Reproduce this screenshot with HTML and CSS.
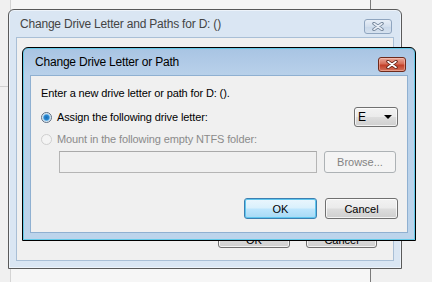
FILE: index.html
```html
<!DOCTYPE html>
<html>
<head>
	<meta charset="utf-8">
	<title>Change Drive Letter or Path</title>
	<link rel="stylesheet" href="styles.css">
</head>
<body>
	<div class="desk">
		<div class="bgpanel"></div>
		<div class="bgline"></div>

		<div class="win outer inactive">
			<div class="titlebar">
				<span class="title">Change Drive Letter and Paths for D: ()</span>
				<span class="close">
					<svg width="12" height="9" viewBox="0 0 12 9"><path d="M2 1.5L10 7.5M10 1.5L2 7.5" stroke="#6d7f95" stroke-width="3.4" stroke-linecap="round"/><path d="M2 1.5L10 7.5M10 1.5L2 7.5" stroke="#e8eef6" stroke-width="1.6" stroke-linecap="round"/></svg>
				</span>
			</div>
			<div class="client">
				<div class="actions">
					<button type="button" class="btn ok-back">OK</button>
					<button type="button" class="btn cancel-back">Cancel</button>
				</div>
			</div>
		</div>

		<div class="win inner active">
			<div class="titlebar">
				<span class="title">Change Drive Letter or Path</span>
				<span class="close">
					<svg width="12" height="9" viewBox="0 0 12 9"><path d="M2 1.5L10 7.5M10 1.5L2 7.5" stroke="#5c1d12" stroke-width="3.4" stroke-linecap="round"/><path d="M2 1.5L10 7.5M10 1.5L2 7.5" stroke="#fff" stroke-width="1.6" stroke-linecap="round"/></svg>
				</span>
			</div>
			<div class="client">
				<div class="prompt">Enter a new drive letter or path for D: ().</div>
				<div class="row row-assign">
					<span class="radio checked"></span>
					<span class="label">Assign the following drive letter:</span>
					<span class="combo"><span class="combo-val">E</span><span class="arrow"></span></span>
				</div>
				<div class="row row-mount disabled">
					<span class="radio"></span>
					<span class="label">Mount in the following empty NTFS folder:</span>
				</div>
				<div class="row row-folder">
					<span class="field"></span>
					<button type="button" class="btn browse" disabled>Browse...</button>
				</div>
				<div class="buttons">
					<button type="button" class="btn default">OK</button>
					<button type="button" class="btn">Cancel</button>
				</div>
			</div>
		</div>
	</div>
</body>
</html>
```

FILE: styles.css
```css
* {
	margin: 0;
	padding: 0;
	box-sizing: border-box;
}

html, body {
	background: #f0f0f0;
	font-family: "Liberation Sans", Arial, sans-serif;
	font-size: 11px;
	color: #000;
}

.desk {
	position: relative;
	width: 432px;
	height: 282px;
	overflow: hidden;
}

/* window far behind */
.bgpanel {
	position: absolute;
	left: 10px;
	top: 0;
	width: 361px;
	height: 282px;
	background: #f6f6f6;
	border-left: 1px solid #d4d4d4;
	border-right: 1px solid #7a7a7a;
}
.bgline {
	position: absolute;
	left: 0;
	top: 86px;
	width: 9px;
	height: 1px;
	background: #d0d0d0;
}

/* windows */
.win {
	position: absolute;
	display: flex;
	flex-direction: column;
	padding: 0 7px 7px;
	border-radius: 6px 6px 0 0;
}
.win.outer {
	left: 8px;
	top: 9px;
	width: 394px;
	height: 260px;
	border: 1px solid #5a5a5a;
	background: #dae6f3;
	box-shadow: inset 0 0 0 1px #edf3fa;
}
.win.inner {
	left: 22px;
	top: 47px;
	width: 394px;
	height: 194px;
	border: 1px solid #000;
	background: linear-gradient(#a8c4e3 0, #b9d1ea 28px, #bcd4eb 100%);
	box-shadow: inset 0 0 0 1px #63c9e8;
}

.titlebar {
	display: flex;
	align-items: flex-start;
	height: 27px;
	flex: none;
}
.title {
	flex: 1;
	padding: 7px 0 0 4px;
	font-size: 12px;
	line-height: 15px;
	letter-spacing: -0.2px;
	white-space: nowrap;
}
.inactive .title {
	color: #444;
}
.active .title {
	color: #000;
	padding-left: 5px;
}

.close {
	display: flex;
	align-items: center;
	justify-content: center;
	width: 28px;
	height: 15px;
	margin: 9px 2px 0 0;
	border-radius: 3px;
}
.inactive .close {
	border: 1px solid #8fa5bf;
	background: linear-gradient(#e8eff7, #d3dfed 50%, #c8d7e9 51%, #d6e2ef);
}
.active .close {
	border: 1px solid #6e2a1c;
	background: linear-gradient(#e9a99a, #d66d57 45%, #c23f28 55%, #d2735c);
	box-shadow: inset 0 0 0 1px rgba(255, 210, 200, .45);
}

.client {
	flex: 1;
	background: #f0f0f0;
	border: 1px solid #a9bfd6;
}
.inner .client {
	border-color: #8fb0d1;
	padding: 10px 9px 0 10px;
	letter-spacing: -0.12px;
}

/* outer dialog buttons, mostly hidden */
.actions {
	display: flex;
	justify-content: flex-end;
	gap: 16px;
	margin-top: 188px;
	padding-right: 16px;
}
.ok-back,
.cancel-back {
	height: 22px;
	padding-top: 5px;
	font-size: 12px;
}
.ok-back {
	width: 72px;
}
.cancel-back {
	width: 71px;
}

/* inner dialog */
.prompt {
	line-height: 14px;
}

.row {
	display: flex;
	align-items: center;
}
.row-assign {
	height: 20px;
	margin-top: 7px;
}
.row-mount {
	height: 14px;
	margin-top: 5px;
}
.row-folder {
	height: 22px;
	margin-top: 5px;
	padding-left: 18px;
}

.radio {
	width: 11px;
	height: 11px;
	border-radius: 50%;
	border: 1px solid #8a8a8a;
	background: radial-gradient(circle at 40% 35%, #fff, #e2e2e2 70%, #cfcfcf);
	flex: none;
	position: relative;
}
.radio.checked {
	border-color: #5c6f85;
	background: radial-gradient(circle at 50% 50%, #1a6bb0 0, #2a8ad3 2.5px, #a9d4f2 3.5px, #f4f4f4 4.5px, #dcdcdc 100%);
}
.disabled .radio {
	border-color: #cfcfcf;
	background: #f4f4f4;
}
.label {
	margin-left: 5px;
	line-height: 14px;
	white-space: nowrap;
}
.disabled .label {
	color: #8b8b8b;
}

.combo {
	display: flex;
	align-items: center;
	margin-left: auto;
	width: 44px;
	height: 20px;
	border: 1px solid #707070;
	border-radius: 3px;
	background: linear-gradient(#f2f2f2, #ebebeb 48%, #dddddd 52%, #cfcfcf);
	box-shadow: inset 0 0 0 1px rgba(255, 255, 255, .7);
	padding-left: 3px;
}
.combo-val {
	flex: 1;
	font-size: 12px;
}
.arrow {
	width: 0;
	height: 0;
	border-left: 4px solid transparent;
	border-right: 4px solid transparent;
	border-top: 4px solid #000;
	margin-right: 5px;
}

.field {
	width: 258px;
	height: 22px;
	border: 1px solid #b5b5b5;
	border-top-color: #a9a9a9;
	background: #f0f0f0;
}

.btn {
	font-family: "Liberation Sans", Arial, sans-serif;
	font-size: 11px;
	color: #000;
	border: 1px solid #707070;
	border-radius: 3px;
	background: linear-gradient(#f2f2f2, #ebebeb 48%, #dddddd 52%, #cfcfcf);
	box-shadow: inset 0 0 0 1px rgba(255, 255, 255, .75);
	outline: 0;
}
.btn.browse {
	width: 72px;
	height: 22px;
	margin-left: 7px;
	border-color: #adb2b5;
	background: #f4f4f4;
	box-shadow: none;
	color: #838383;
}
.btn.default {
	border-color: #3c7fb1;
	background: linear-gradient(#eaf6fd, #d9f0fc 48%, #bee6fd 52%, #a7d9f5);
	box-shadow: inset 0 0 0 1px #5fc6ee;
}

.buttons {
	display: flex;
	justify-content: flex-end;
	gap: 8px;
	margin-top: 25px;
}
.buttons .btn {
	width: 73px;
	height: 21px;
}
```
